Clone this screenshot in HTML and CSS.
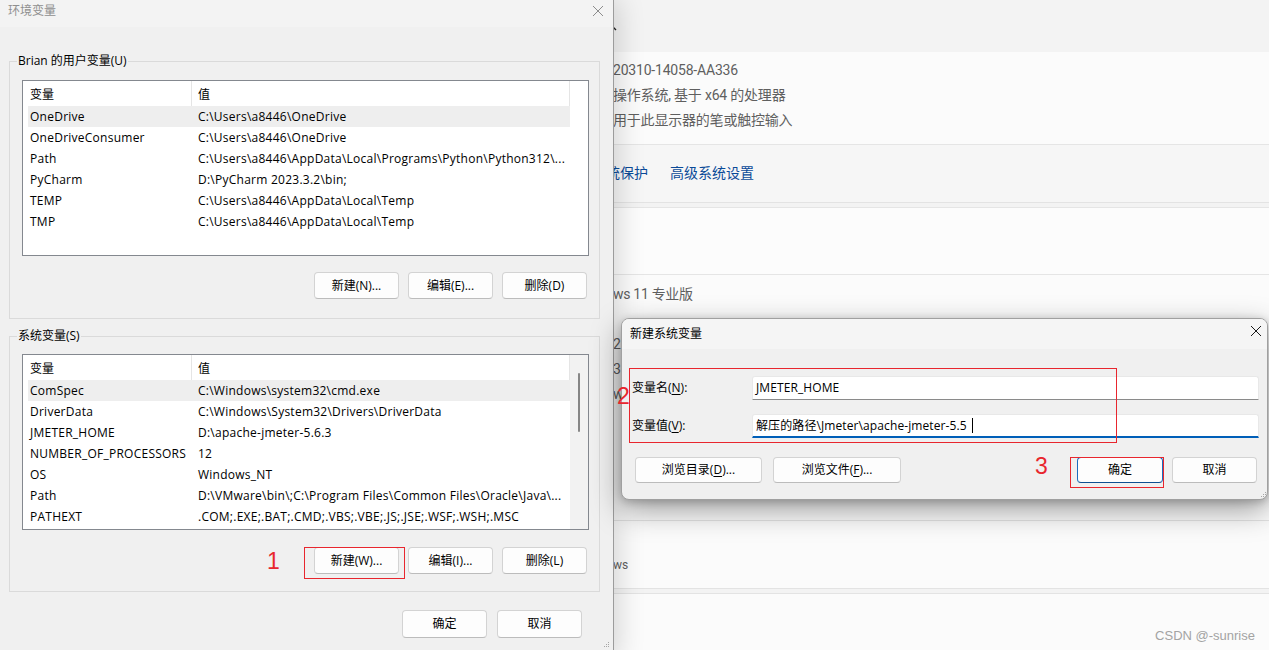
FILE: index.html
```html
<!DOCTYPE html>
<html lang="zh-CN">
<head>
<meta charset="utf-8">
<title>环境变量</title>
<link rel="stylesheet" href="styles.css">
</head>
<body>
<div class="desktop">
  <main class="settings">
    <div class="s-top">
      <svg class="chev" width="12" height="8" viewBox="0 0 12 8"><path d="M2 6 L6 2 L10 6" fill="none" stroke="#222" stroke-width="1.4"/></svg>
    </div>
    <section class="s-specs">
      <p>20310-14058-AA336</p>
      <p>操作系统, 基于 x64 的处理器</p>
      <p>用于此显示器的笔或触控输入</p>
    </section>
    <nav class="s-links"><a>系统保护</a><a>高级系统设置</a></nav>
    <div class="s-gap"></div>
    <section class="s-card2"></section>
    <section class="s-details">
      <p>ws 11 专业版</p>
      <p>&nbsp;</p>
      <p>2</p>
      <p>31</p>
      <p>w</p>
    </section>
    <section class="s-row2"><p>ws</p></section>
    <div class="s-gap"></div>
    <section class="s-bottom"></section>
  </main>

  <div class="dlg env">
    <div class="dlg-title inactive">
      <span>环境变量</span>
      <svg class="close" width="12" height="12" viewBox="0 0 12 12"><path d="M1 1 L11 11 M11 1 L1 11" stroke="#8c8c8c" stroke-width="1"/></svg>
    </div>
    <div class="dlg-body">
      <fieldset class="grp grp-user">
        <legend>Brian 的用户变量(U)</legend>
        <div class="lv">
          <div class="lv-main">
            <div class="lv-head"><span>变量</span><span>值</span></div>
            <div class="lv-row sel"><span>OneDrive</span><span>C:\Users\a8446\OneDrive</span></div>
            <div class="lv-row"><span>OneDriveConsumer</span><span>C:\Users\a8446\OneDrive</span></div>
            <div class="lv-row"><span>Path</span><span>C:\Users\a8446\AppData\Local\Programs\Python\Python312\...</span></div>
            <div class="lv-row"><span>PyCharm</span><span>D:\PyCharm 2023.3.2\bin;</span></div>
            <div class="lv-row"><span>TEMP</span><span>C:\Users\a8446\AppData\Local\Temp</span></div>
            <div class="lv-row"><span>TMP</span><span>C:\Users\a8446\AppData\Local\Temp</span></div>
          </div>
          <div class="lv-scroll"></div>
        </div>
        <div class="btns">
          <button class="btn">新建(N)...</button>
          <button class="btn">编辑(E)...</button>
          <button class="btn">删除(D)</button>
        </div>
      </fieldset>

      <fieldset class="grp grp-sys">
        <legend>系统变量(S)</legend>
        <div class="lv">
          <div class="lv-main">
            <div class="lv-head"><span>变量</span><span>值</span></div>
            <div class="lv-row sel"><span>ComSpec</span><span>C:\Windows\system32\cmd.exe</span></div>
            <div class="lv-row"><span>DriverData</span><span>C:\Windows\System32\Drivers\DriverData</span></div>
            <div class="lv-row"><span>JMETER_HOME</span><span>D:\apache-jmeter-5.6.3</span></div>
            <div class="lv-row"><span>NUMBER_OF_PROCESSORS</span><span>12</span></div>
            <div class="lv-row"><span>OS</span><span>Windows_NT</span></div>
            <div class="lv-row"><span>Path</span><span>D:\VMware\bin\;C:\Program Files\Common Files\Oracle\Java\...</span></div>
            <div class="lv-row"><span>PATHEXT</span><span>.COM;.EXE;.BAT;.CMD;.VBS;.VBE;.JS;.JSE;.WSF;.WSH;.MSC</span></div>
          </div>
          <div class="lv-scroll has"><div class="thumb"></div></div>
        </div>
        <div class="btns">
          <button class="btn">新建(W)...</button>
          <button class="btn">编辑(I)...</button>
          <button class="btn">删除(L)</button>
        </div>
      </fieldset>

      <div class="foot">
        <button class="btn btn-foot">确定</button>
        <button class="btn btn-foot">取消</button>
      </div>
    </div>
    <svg class="grip grip-env" width="7" height="7" viewBox="0 0 7 7"><g fill="#a6a6a6"><rect x="5" y="1" width="1" height="1"/><rect x="3" y="3" width="1" height="1"/><rect x="5" y="3" width="1" height="1"/><rect x="1" y="5" width="1" height="1"/><rect x="3" y="5" width="1" height="1"/><rect x="5" y="5" width="1" height="1"/></g></svg>
  </div>

  <div class="dlg newvar">
    <div class="dlg-title">
      <span>新建系统变量</span>
      <svg class="close" width="12" height="12" viewBox="0 0 12 12"><path d="M1 1 L11 11 M11 1 L1 11" stroke="#1a1a1a" stroke-width="1"/></svg>
    </div>
    <div class="dlg-body nv-body">
      <div class="form">
        <label>变量名(<u>N</u>):</label>
        <div class="field">JMETER_HOME</div>
        <label>变量值(<u>V</u>):</label>
        <div class="field focus">解压的路径\Jmeter\apache-jmeter-5.5<span class="caret"></span></div>
      </div>
      <div class="nv-btns">
        <div class="nv-group">
          <button class="btn btn-wide">浏览目录(<u>D</u>)...</button>
          <button class="btn btn-wide">浏览文件(<u>F</u>)...</button>
        </div>
        <div class="nv-group nv-right">
          <button class="btn btn-ok default">确定</button>
          <button class="btn btn-ok">取消</button>
        </div>
      </div>
    </div>
    <svg class="grip grip-nv" width="7" height="7" viewBox="0 0 7 7"><g fill="#a6a6a6"><rect x="5" y="1" width="1" height="1"/><rect x="3" y="3" width="1" height="1"/><rect x="5" y="3" width="1" height="1"/><rect x="1" y="5" width="1" height="1"/><rect x="3" y="5" width="1" height="1"/><rect x="5" y="5" width="1" height="1"/></g></svg>
  </div>

  <div class="redbox rb1"></div>
  <div class="redbox rb2"></div>
  <div class="redbox rb3"></div>
  <span class="anno an1">1</span>
  <span class="anno an2">2</span>
  <span class="anno an3">3</span>

  <span class="watermark">CSDN @-sunrise</span>
</div>
</body>
</html>
```

FILE: styles.css
```css
* { box-sizing: border-box; }
html, body { margin: 0; padding: 0; }
body {
  width: 1269px;
  height: 650px;
  overflow: hidden;
  background: #f3f3f3;
  font-family: "Open Sans", "Noto Sans CJK SC", sans-serif;
  font-size: 12px;
  color: #000;
}
.desktop { position: relative; width: 1269px; height: 650px; overflow: hidden; }

/* ---------- background settings page ---------- */
.settings {
  display: flex;
  flex-direction: column;
  height: 650px;
  font-family: Roboto, "Noto Sans CJK SC", sans-serif;
  font-size: 14px;
  color: #5f5f5f;
}
.settings p { margin: 0; white-space: nowrap; }
.s-top { height: 52px; background: #f3f3f3; padding: 24px 0 0 606px; }
.chev { display: block; }
.s-specs {
  height: 93px;
  background: #fbfbfb;
  border-bottom: 1px solid #e5e5e5;
  padding: 6px 0 0 613px;
}
.s-specs p { line-height: 25px; letter-spacing: -0.2px; }
.s-links {
  height: 58px;
  background: #f6f6f6;
  border-bottom: 1px solid #e3e3e3;
  display: flex;
  align-items: center;
  gap: 22px;
  padding: 0 0 3px 592px;
}
.s-links a { color: #0a4a98; }
.s-gap { height: 4px; background: #f3f3f3; }
.s-card2 {
  height: 68px;
  background: #fcfcfc;
  border-top: 1px solid #e5e5e5;
  border-bottom: 1px solid #e5e5e5;
}
.s-details {
  height: 246px;
  background: #fbfbfb;
  border-bottom: 1px solid #e3e3e3;
  padding: 7px 0 0 613px;
}
.s-details p { line-height: 25px; letter-spacing: -0.3px; }
.s-row2 {
  height: 68px;
  background: #fbfbfb;
  border-bottom: 1px solid #e3e3e3;
  padding: 36px 0 0 613px;
  font-size: 12px;
}
.s-row2 p { line-height: 16px; }
.s-bottom { flex: 1; background: #fbfbfb; border-top: 1px solid #e3e3e3; }

/* ---------- dialogs ---------- */
.dlg { position: absolute; background: #f0f0f0; }
.dlg-title {
  display: flex;
  justify-content: space-between;
  align-items: flex-start;
  line-height: 16px;
}
.close { display: block; }
.grip { position: absolute; display: block; }

.env {
  left: 0;
  top: 0;
  width: 614px;
  height: 660px;
  border-right: 1px solid #9c9c9c;
  box-shadow: 4px 0 26px rgba(0, 0, 0, 0.16);
  z-index: 2;
}
.env .dlg-title {
  height: 27px;
  background: #f3f3f3;
  padding: 3px 9px 0 8px;
  color: #8f8f8f;
}
.env .close { margin-top: 2px; }
.env .dlg-body { padding: 26px 13px 0 9px; }
.grip-env { left: 603px; top: 641px; }

.grp {
  margin: 0;
  min-width: 0;
  width: 591px;
  border: 1px solid #dadada;
  padding: 11px 10px 19px 12px;
}
.grp legend {
  padding: 0 1px;
  margin-left: -5px;
  line-height: 16px;
  font-size: 12px;
}
.grp-sys { margin-top: 9px; padding: 10px 10px 17px 12px; }

.lv {
  display: flex;
  height: 176px;
  border: 1px solid #84888f;
  background: #fff;
}
.lv-main { flex: 1; min-width: 0; }
.lv-scroll { width: 18px; }
.lv-scroll.has {
  background: #f2f2f2;
  display: flex;
  justify-content: center;
  padding-top: 18px;
}
.thumb { width: 2px; height: 59px; background: #878787; border-radius: 1px; }

.lv-head {
  display: grid;
  grid-template-columns: 168px 1fr;
  height: 25px;
  border-right: 1px solid #e5e5e5;
}
.lv-head span { padding-top: 2px; line-height: 23px; }
.lv-head span:first-child { padding-left: 7px; }
.lv-head span + span { border-left: 1px solid #e5e5e5; padding-left: 6px; }

.lv-row {
  display: grid;
  grid-template-columns: 163px 1fr;
  height: 21px;
  line-height: 21px;
  margin-left: 5px;
  white-space: nowrap;
  letter-spacing: 0.25px;
}
.lv-row span { overflow: hidden; }
.lv-row span:first-child { padding-left: 2px; }
.lv-row span + span { padding-left: 7px; }
.lv-row.sel { background: #eeeeee; }

.btn {
  width: 85px;
  height: 27px;
  padding: 0;
  background: #fdfdfd;
  border: 1px solid #d3d3d3;
  border-bottom-color: #bcbcbc;
  border-radius: 4px;
  font: inherit;
  color: #000;
  line-height: 16px;
}
.btn u, label u { text-underline-offset: 2px; }
.btns {
  display: flex;
  justify-content: flex-end;
  gap: 9px;
  margin-top: 16px;
  padding-right: 2px;
}
.grp-sys .btns { margin-top: 17px; }
.foot {
  display: flex;
  justify-content: flex-end;
  gap: 10px;
  margin-top: 18px;
  padding-right: 18px;
}
.btn-foot { height: 28px; }

/* new variable dialog */
.newvar {
  left: 621px;
  top: 318px;
  width: 647px;
  height: 182px;
  border: 1px solid #a0a0a0;
  border-radius: 8px;
  overflow: hidden;
  box-shadow: 0 10px 30px rgba(0, 0, 0, 0.38), 0 2px 8px rgba(0, 0, 0, 0.2);
  z-index: 3;
}
.newvar .dlg-title {
  height: 30px;
  background: #f5f5f5;
  padding: 7px 5px 0 8px;
}
.newvar .close { margin-top: -1px; }
.nv-body { padding: 27px 8px 15px 10px; }
.form {
  display: grid;
  grid-template-columns: 120px 1fr;
  row-gap: 14px;
  align-items: center;
}
.form label { line-height: 16px; }
.field {
  height: 24px;
  background: #fff;
  border: 1px solid #e8e8e8;
  border-bottom: 1px solid #8a8a8a;
  border-radius: 3px 3px 0 0;
  padding-left: 3px;
  line-height: 22px;
  white-space: nowrap;
  letter-spacing: 0.1px;
}
.field.focus { border-bottom: 2px solid #005fb8; line-height: 21px; }
.caret {
  display: inline-block;
  width: 1px;
  height: 15px;
  background: #000;
  vertical-align: -3px;
  margin-left: 5px;
}
.nv-btns {
  display: flex;
  justify-content: space-between;
  margin: 19px 0 0 3px;
  padding-right: 2px;
}
.nv-group { display: flex; gap: 11px; }
.nv-right { gap: 9px; }
.btn-wide { width: 127px; height: 26px; }
.nv-group .btn-wide + .btn-wide { width: 128px; }
.btn-ok { width: 85px; height: 26px; }
.btn-ok.default { width: 86px; border-color: #1a6cc0; border-bottom-color: #0e4f91; }
.grip-nv { left: 638px; top: 172px; }

/* annotations */
.redbox { position: absolute; border: 1px solid #e8262e; z-index: 5; }
.rb1 { left: 304px; top: 547px; width: 101px; height: 32px; }
.rb2 { left: 629px; top: 368px; width: 488px; height: 75px; }
.rb3 { left: 1070px; top: 457px; width: 94px; height: 31px; }
.anno {
  position: absolute;
  z-index: 5;
  color: #e8262e;
  font-family: "Liberation Sans", sans-serif;
  font-size: 23px;
  line-height: 23px;
}
.an1 { left: 267px; top: 550px; }
.an2 { left: 617px; top: 385px; }
.an3 { left: 1035px; top: 455px; }

.watermark {
  position: absolute;
  right: 14px;
  top: 627px;
  z-index: 6;
  font-family: "Liberation Sans", sans-serif;
  font-size: 13px;
  line-height: 18px;
  color: #a3a3a3;
}
```
